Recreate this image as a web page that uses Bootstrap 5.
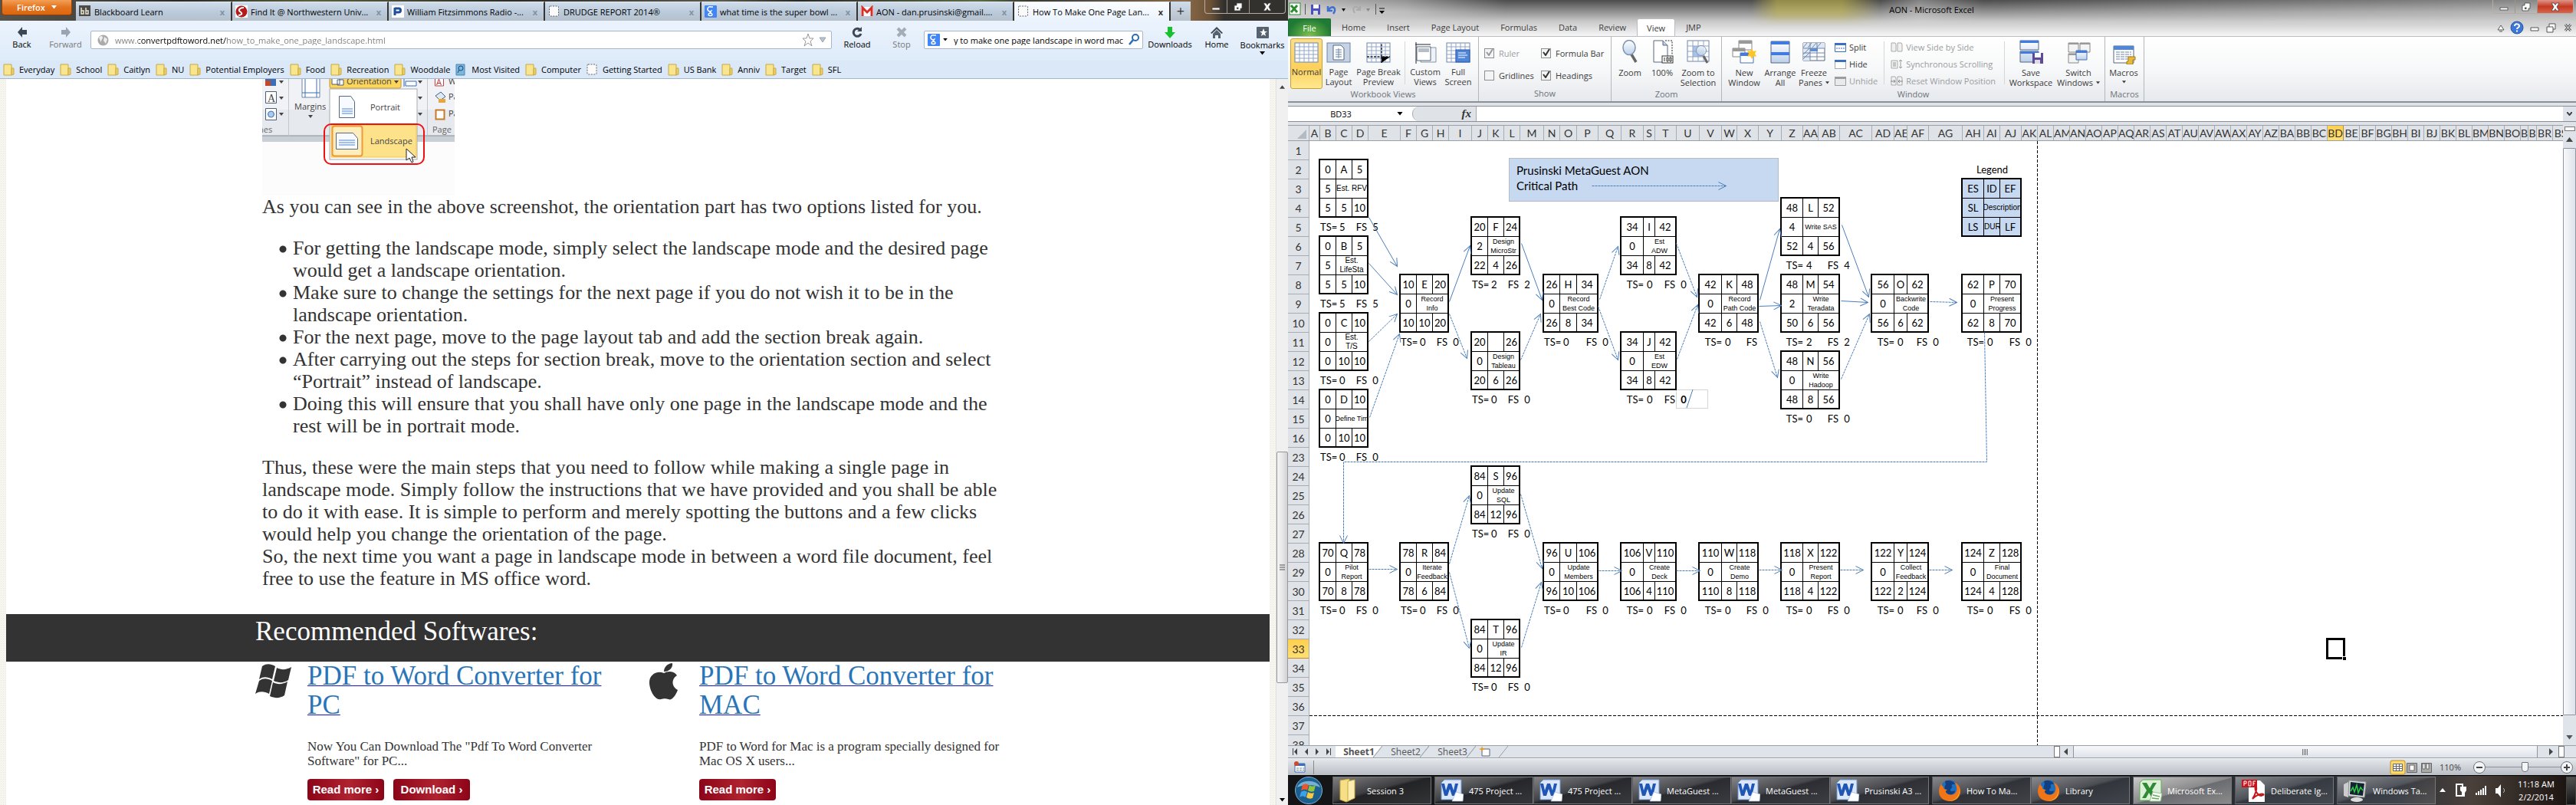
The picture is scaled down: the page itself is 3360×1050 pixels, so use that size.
<!DOCTYPE html>
<html lang="en">
<head>
<meta charset="utf-8">
<title>Desktop: Firefox and Microsoft Excel</title>
<link href="https://cdn.jsdelivr.net/npm/bootstrap@5.3.0/dist/css/bootstrap.min.css" rel="stylesheet">
<style>
  :root { --ui: "Open Sans", "Noto Sans", sans-serif; --cell: Lato, "Open Sans", sans-serif; --page: "Liberation Serif", serif; }
  body { font: 11px/13px var(--ui); color: #000; background: #fff; }
  button, input { font: inherit; color: inherit; border: 0; background: none; padding: 0; margin: 0; }
  svg { display: block; flex: none; }
  a { color: inherit; }
  .win { min-width: 0; }

  /* ---------- browser ---------- */
  .fx-title { height: 27px; background: linear-gradient(90deg,#57544e,#4a4640 6%,#2b2a25 14%,#5b5f3c 24%,#2e2c26 40%,#5d5a4d 56%,#2b2925 62%,#5c6b45 76%,#3b3a2c 80%,#4f4a44 84%,#8a6a48 92%,#6b5136 94%,#33312e 95%); }
  .fx-menu { width: 92px; height: 20px; margin-left: 2px; color: #fff; font-weight: 600; border-radius: 0 0 4px 4px; background: linear-gradient(#f2a055,#e4731e 50%,#dc6610); border: 1px solid #8f4108; border-top: 0; }
  .fx-tabs { margin-left: 5px; padding-top: 2px; flex: 1 1 auto; min-width: 0; }
  .fx-tab { flex: 0 1 204px; min-width: 0; height: 25px; padding: 0 8px 0 4px; border-right: 2px solid #37352f; background: linear-gradient(#cfdcea,#b9c9da 60%,#b6c0ca); border-top: 1px solid #e4edf6; }
  .fx-tab.on { background: linear-gradient(#fbfdff,#ebf3fd); }
  .fx-tab .lbl { flex: 1 1 auto; }
  .fx-x { color: #8592a0; font-weight: 700; font-size: 11px; }
  .fx-tab.on .fx-x { color: #333; }
  .fx-plus { width: 26px; height: 25px; background: linear-gradient(#cfdcea,#b6c0ca); color: #333; font-size: 18px; }
  .caps { height: 18px; margin-right: 3px; border: 1px solid #b5aca3; border-top: 0; border-radius: 0 0 4px 4px; overflow: hidden; }
  .caps button { width: 29px; border-right: 1px solid #9d958c; display: flex; align-items: center; justify-content: center; }
  .caps button:last-child { width: 46px; border: 0; }
  .fx-nav { height: 52px; background: linear-gradient(#ebf3fd,#deebf9); }
  .fx-btn { height: 33px; display: flex; flex-direction: column; align-items: center; justify-content: space-between; white-space: nowrap; }
  .fx-btn.tall { height: 41px; }
  .fx-box { height: 24px; border: 1px solid #a9b6c6; border-radius: 2px; background: #fff; }
  .fx-url { width: 400px; background: linear-gradient(90deg,#7c7c7c 31px,#000 31px 146px,#7c7c7c 146px); -webkit-background-clip: text; background-clip: text; -webkit-text-fill-color: transparent; }
  .fx-marks { height: 24px; background: #dae8f8; border-bottom: 1px solid #a3b5c9; padding-left: 4px; gap: 7px; }
  .fx-marks a { display: flex; align-items: center; gap: 6px; text-decoration: none; white-space: nowrap; color: #000; }
  .tex { width: 8px; background: #f6f5ee; background-image: radial-gradient(#eceae0 1px,transparent 1px); background-size: 3px 3px; }
  .fx-scroll { width: 16px; background: #f0f0f0; border-left: 1px solid #e3e3e3; }
  .fx-thumb { height: 302px; border: 1px solid #979797; border-radius: 2px; background: linear-gradient(90deg,#f5f5f5,#e9e9eb 45%,#d0d0d2); }

  .article { padding-left: 334px; font: 26px/29px var(--page); color: #333; white-space: nowrap; }
  .article p { margin: 0 0 25px; }
  .article ul { padding-left: 22px; margin: 0 0 25px; list-style: none; }
  .article li { padding-left: 18px; background: radial-gradient(circle at 5px 16px,#333 4px,transparent 5px); }
  .article .last { margin: 0; }
  .band { height: 62px; background: #333; color: #fff; font: 35px/40px var(--page); padding: 3px 0 0 325px; margin-top: 32px; }
  .soft { padding-left: 325px; color: #333; }
  .soft section { width: 513px; display: flex; }
  .soft h2 { font: 35px/38px var(--page); color: #2a75b8; margin: 0 0 25px; white-space: nowrap; }
  .soft h2 a { color: #2a75b8; text-decoration-color: #1515cc; text-decoration-thickness: 1px; }
  .soft p { font: 17px/19px var(--page); margin: 0 0 14px; white-space: nowrap; }
  .pic { width: 68px; padding-top: 2px; }
  .pic.mac { width: 66px; }
  .red { width: 100px; height: 28px; border-radius: 4px; background: linear-gradient(90deg,#8c0418,#b02330 55%,#8c0418); color: #fff; font: bold 15px/28px "Liberation Sans", sans-serif; display: block; text-decoration: none; text-align: center; }

  /* ---------- spreadsheet ---------- */
  .xl-top { background: linear-gradient(#4c4c4c,#8b8b8b 14px,#c9c9c9 28px,#f4f4f4 46px); position: relative; }
  .glow { position: absolute; inset: 0; background: linear-gradient(90deg,rgba(255,255,255,.6),rgba(255,255,255,.4) 9%,transparent 17%,transparent 36%,rgba(205,190,70,.55) 38%,rgba(205,190,70,.55) 43%,transparent 46%,rgba(255,255,255,.3) 49%,transparent 54%,rgba(255,255,255,.15) 70%,rgba(255,255,255,.35)); -webkit-mask-image: linear-gradient(#000 16px,transparent 34px); mask-image: linear-gradient(#000 16px,transparent 34px); }
  .xl-title { height: 24px; position: relative; }
  .xl-title .qat { overflow: visible; }
  .xl-tabs { height: 24px; position: relative; border-bottom: 1px solid #b9bcc1; }
  .xl-tabs button { padding: 0 14px; color: #3b3b3b; }
  .xl-tabs .file { width: 56px; padding: 0; color: #fff; border-radius: 2px 2px 0 0; background: radial-gradient(ellipse at 50% 100%,#7cc24c,#1f7a35 75%); border: 1px solid #1c6a2e; border-bottom: 0; }
  .xl-tabs .on { background: #fff; border: 1px solid #b9bcc1; border-bottom: 0; border-radius: 3px 3px 0 0; padding: 0 12px; }
  .xl-rib { height: 86px; background: linear-gradient(#fff,#f7f8f9 50%,#e6e9ed); border-bottom: 2px solid #8b9097; color: #3b3b3b; }
  .grp { border-right: 1px solid #b4b8bd; display: flex; flex-direction: column; }
  .grp .cap { color: #6d7278; text-align: center; height: 17px; }
  .grp .body { flex: 1 1 auto; display: flex; padding: 2px 3px 0; }
  .rb { height: 66px; display: flex; flex-direction: column; align-items: center; white-space: nowrap; text-align: center; border: 1px solid transparent; flex: none; }
  .rb svg { margin: 1px 0 4px; }
  .rb.on { background: linear-gradient(#fddf8b,#fcd05c 60%,#ffe98f); border-color: #c9a033; border-radius: 3px; }
  .w40 { width: 40px; } .w42 { width: 42px; } .w46 { width: 46px; } .w52 { width: 52px; } .w62 { width: 62px; }
  .rsep { width: 1px; background: #d5d7da; height: 56px; margin: 4px 3px 0; }
  .stack { gap: 9px; padding-top: 5px; }
  .stack button { display: flex; align-items: center; gap: 4px; white-space: nowrap; }
  .dim { color: #9a9da1; }
  .chk { appearance: none; width: 13px; height: 13px; border: 1px solid #8b8f94; background: #f4f4f4; margin: 0; }
  .chkrow { display: flex; align-items: center; gap: 6px; height: 14px; position: relative; }
  .chkrow svg { position: absolute; left: 2px; top: 2px; }
  .fbar { height: 29px; padding-top: 4px; background: #dfe3e8; }
  .fbar .line { height: 21px; background: #fff; border-bottom: 1px solid #8b9097; border-top: 1px solid #8b9097; }
  .namebox { width: 130px; text-align: center; }
  .fxarea { width: 84px; background: #dfe3e8; border-radius: 9px 0 0 9px; border: 1px solid #a5abb3; border-width: 0 1px; font: italic bold 15px/18px "Liberation Serif", serif; color: #333; text-align: right; padding-right: 6px; }
  .heads { height: 21px; background: #dfe3e8; border-top: 1px solid #9aa0a8; border-bottom: 1px solid #9aa0a8; font: 14px/20px var(--cell); color: #333; overflow: hidden; }
  .heads div { flex: none; border-right: 1px solid #a7adb5; overflow: hidden; white-space: nowrap; text-align: center; }
  .heads .corner { width: 28px; }
  .sel { background: linear-gradient(#ffd04e,#ffdf72) !important; border-color: #c08a2c !important; }
  .rows { width: 28px; background: #dfe3e8; font: 14px/25px var(--cell); color: #333; overflow: hidden; border-right: 1px solid #a7adb5; }
  .rows div { height: 25px; border-bottom: 1px solid #a7adb5; text-align: center; }
  .sheet { position: relative; overflow: hidden; font: 13px/25px var(--cell); min-width: 0; }
  .sheet > svg { position: absolute; left: 0; top: 0; }
  .act { position: absolute; }
  .box { display: grid; grid-template-rows: 25px 25px 23px; border: 2px solid #000; background: #fff; text-align: center; width: max-content; }
  .box div { border-right: 1px solid #000; border-bottom: 1px solid #000; overflow: hidden; white-space: nowrap; }
  .box .e { border-right: 0; } .box .b { border-bottom: 0; }
  .box .dsc { grid-column: span 2; border-right: 0; font: 9px/12px "Liberation Sans", sans-serif; display: flex; align-items: center; justify-content: center; }
  .box .mid { font-size: 10px; }
  .box.key { background: #c6d9f1; }
  .box .dur { font: 10px/23px "Liberation Sans", sans-serif; }
  .slack { display: grid; padding-left: 2px; white-space: nowrap; height: 25px; }
  .slack span { text-align: right; }
  .slack .v { text-align: left; padding-left: 4px; }
  .note { position: absolute; left: 260px; top: 22px; width: 352px; height: 57px; background: #c6d9f1; border: 1px solid #b7bcc4; padding: 5px 9px; font: 15px/20px var(--cell); }
  .cursor { position: absolute; left: 1326px; top: 648px; width: 25px; height: 28px; border: 3px solid #000; }
  .cursor::after { content: ""; position: absolute; right: -5px; bottom: -5px; background: #000; border: 1px solid #fff; box-sizing: content-box; width: 4px; height: 4px; }
  .stray { position: absolute; left: 478px; top: 324px; width: 42px; height: 25px; border: 1px solid #d5d5d5; }
  .xl-vs { width: 17px; background: #dfe3ea; }
  .xl-vt { border: 1px solid #8f96a0; border-radius: 1px; background: linear-gradient(90deg,#f7f8fa,#dfe3ea); }
  .tabsbar { height: 17px; background: #dfe3ea; border-top: 1px solid #9aa0a8; border-bottom: 1px solid #9aa0a8; font-size: 12px; line-height: 15px; color: #555; }
  .stab { width: 61px; text-align: center; background: linear-gradient(to bottom right,transparent calc(50% - 1px),#9aa0a8 50%,transparent calc(50% + 1px)) right/12px 100% no-repeat; }
  .stab.first { background: linear-gradient(to bottom right,#fff calc(50% - 1px),#9aa0a8 50%,#dfe3ea calc(50% + 1px)) right/12px 100% no-repeat, linear-gradient(#fff,#fff); }
  .hthumb { border: 1px solid #8f96a0; border-width: 0 1px; background: linear-gradient(#f7f8fa,#dfe3ea); width: 606px; }
  .status { height: 22px; background: linear-gradient(#e4e7eb,#b9bec5); border-top: 1px solid #f5f5f5; color: #444; }
  .zoomr { appearance: none; height: 14px; width: 98px; background: linear-gradient(#8a939d,#8a939d) center/100% 1px no-repeat; }
  .zoomr::-webkit-slider-thumb { appearance: none; width: 9px; height: 13px; background: #f3f5f7; border: 1px solid #6c757f; border-radius: 1px 1px 4px 4px; }
  .round { width: 16px; height: 16px; border-radius: 50%; border: 1px solid #6c757f; background: #f4f5f7; display: flex; align-items: center; justify-content: center; }
  .taskbar { height: 39px; background: linear-gradient(90deg,#141416,#1b1c20 20%,#24262c 50%,#2d323a 86%,#4a403a 92%,#17110e); color: #fff; border-top: 1px solid #000; padding: 1px 0; }
  .tk { width: 129px; height: 36px; display: flex; align-items: center; gap: 7px; padding: 0 4px 0 7px; border: 1px solid #77787b; border-left-color: #55565a; background: linear-gradient(165deg,rgba(255,255,255,.45),rgba(255,255,255,.17) 45%,rgba(255,255,255,.05) 50%,rgba(255,255,255,.12)); white-space: nowrap; overflow: hidden; color: #fff; }
  .tk.cur { background: linear-gradient(165deg,#c9c9c9,#8a8a8a 50%,#6a6c70 52%,#8b8b8b); }
  .orb { width: 60px; }
</style>
</head>
<body class="vh-100 overflow-hidden d-flex">

<svg width="0" height="0" class="position-absolute" aria-hidden="true">
  <defs>
    <linearGradient id="gw" x2="0" y2="1"><stop stop-color="#fff"/><stop offset="1" stop-color="#bcd0ea"/></linearGradient>
    <symbol id="folder" viewBox="0 0 15 16"><path d="M1 1h10v14H1z" fill="#f9e58e" stroke="#c9a940"/><path d="M11 6h3v8l-3 1z" fill="#efd06a" stroke="#c9a940"/></symbol>
    <symbol id="dash" viewBox="0 0 15 16"><rect x="1" y="1" width="12" height="13" rx="1" fill="#fafafa" stroke="#666" stroke-dasharray="2 1.5"/></symbol>
    <symbol id="goog" viewBox="0 0 16 16"><rect width="16" height="16" rx="1" fill="#4285f4"/><path d="M11 2H8a3 3 0 1 0 1 5c0 1-2 1-2 2s3 1 3 3-5 2-5 0 2-2 4-2" fill="none" stroke="#fff" stroke-width="1.4"/></symbol>
    <symbol id="mn" viewBox="0 0 12 12"><rect x="1" y="7" width="10" height="3" fill="#fff" stroke="#444" stroke-width=".8"/></symbol>
    <symbol id="mx" viewBox="0 0 12 12"><path d="M4 1h7v7H9v3H1V4h3z" fill="#fff" stroke="#444" stroke-width=".8"/><path d="M4 6.500h2.500v2.500H4z" fill="#555"/></symbol>
    <symbol id="cl" viewBox="0 0 12 12"><path d="M1 1h3.400L6 3.500 7.600 1H11L8 6l3 5H7.600L6 8.500 4.400 11H1l3-5z" fill="#fff" stroke="#444" stroke-width=".8"/></symbol>
    <symbol id="dn" viewBox="0 0 7 5"><path d="M0 0h7L3.500 4.500z" fill="currentColor"/></symbol>
    <symbol id="up" viewBox="0 0 9 6"><path d="M0 6h9L4.500 0z" fill="#444"/></symbol>
    <symbol id="grid" viewBox="0 0 32 28"><rect x="1" y="1" width="30" height="25" fill="#fff" stroke="#6f86a8"/><path d="M1 6h30M1 11h30M1 16h30M1 21h30M7 1v25M13 1v25M19 1v25M25 1v25" stroke="#8fa6c6" fill="none"/></symbol>
    <symbol id="pgl" viewBox="0 0 32 28"><rect x="1" y="1" width="30" height="25" fill="#c5d3e4" stroke="#6f86a8"/><path d="M9 4h10l4 4v15H9z" fill="#fff" stroke="#56677e"/><path d="M12 10h8M12 13h8M12 16h8M12 19h8M16 8v13" stroke="#6f86a8"/></symbol>
    <symbol id="pbr" viewBox="0 0 32 28"><use href="#grid"/><path d="M20 19V1M1 19h19M20 27v-8h11" stroke="#223" stroke-width="1.500" stroke-dasharray="3 1.500"/></symbol>
    <symbol id="cust" viewBox="0 0 32 28"><path d="M10 7h20v19H10z" fill="#eef3fa" stroke="#8a93a0"/><path d="M5 6h18v18H5z" fill="#fff" stroke="#56677e"/><path d="M7 8h14v5H7z" fill="#b9bec6"/><path d="M3 3h20M4 0v28" stroke="#223"/></symbol>
    <symbol id="full" viewBox="0 0 32 28"><use href="#grid"/><rect x="13" y="10" width="18" height="16" fill="#4f86d8" stroke="#2c57a5"/><path d="M16 14h10M16 17h12M16 20h9" stroke="#fff"/></symbol>
    <symbol id="mag" viewBox="0 0 32 32"><path d="M18 19l6 10" stroke="#666" stroke-width="3.500"/><ellipse cx="15" cy="10" rx="8" ry="9.500" fill="url(#gw)" stroke="#7f93ad" stroke-width="1.500"/></symbol>
    <symbol id="hund" viewBox="0 0 32 32"><path d="M5 1h12l6 6v22H5z" fill="#fff" stroke="#56677e"/><path d="M17 1v6h6" fill="#bcd0ea" stroke="#56677e"/><path d="M20 1h9v18" fill="none" stroke="#223" stroke-dasharray="2 1.500"/><rect x="16" y="21" width="14" height="9" fill="#fff" stroke="#333"/><path d="M19 23v5M22 23h2v5h-2zM26 23h2v5h-2z" fill="none" stroke="#333"/></symbol>
    <symbol id="zsel" viewBox="0 0 32 32"><rect x="2" y="1" width="28" height="27" fill="#fff" stroke="#6f86a8"/><path d="M9 8h14v14H9z" fill="#a9c3e8"/><path d="M2 8h28M2 15h28M2 22h28M9 1v27M16 1v27M23 1v27" stroke="#8fa6c6"/><path d="M23 21l5 9" stroke="#666" stroke-width="3"/><circle cx="20" cy="14" r="6.500" fill="url(#gw)" fill-opacity=".8" stroke="#7f93ad"/></symbol>
    <symbol id="nwin" viewBox="0 0 32 32"><path d="M9 1h17v12H9z" fill="#fff" stroke="#888"/><path d="M9 1h17v4H9z" fill="#999"/><path d="M1 11h16v11H1z" fill="#fff" stroke="#888"/><path d="M1 11h16v4H1z" fill="#999"/><path d="M11 17h17v13H11z" fill="#fff" stroke="#4472b8"/><path d="M11 17h17v4H11z" fill="#3f7be0"/><path d="M26 11l2 4 4-1-2 4 2 4-4-1-2 4-2-4-4 1 2-4-2-4 4 1z" fill="#ffc423"/></symbol>
    <symbol id="arr" viewBox="0 0 32 32"><path d="M4 2h24v28H4z" fill="url(#gw)" stroke="#56677e"/><path d="M4 2h24v4H4zM4 16h24v4H4z" fill="#3f7be0"/></symbol>
    <symbol id="frz" viewBox="0 0 32 30"><path d="M2 3h28v23H2z" fill="#fff" stroke="#56677e"/><path d="M2 3h28v7H2zM2 10h9v16H2z" fill="#dfe9f5"/><path d="M11 10h10v4H11z" fill="#5a8fe0"/><path d="M2 10h28M2 16h28M2 21h28M11 3v23M20 3v23M2 9l5-6M8 9l5-6M14 9l5-6M20 9l5-6M2 18l8-8M2 24l9-9" stroke="#6f86a8" fill="none"/></symbol>
    <symbol id="sw" viewBox="0 0 15 12"><path d="M.500 .500h14v11H.500z" fill="#fff" stroke="currentColor"/><path d="M0 0h15v3H0z" fill="currentColor"/><path d="M2 7h11" stroke="currentColor" stroke-dasharray="2 1"/></symbol>
    <symbol id="hid" viewBox="0 0 15 12"><path d="M.500 .500h14v11H.500z" fill="#fff" stroke="#555" stroke-dasharray="1 1"/><path d="M0 0h15v3H0z" fill="currentColor"/></symbol>
    <symbol id="unh" viewBox="0 0 15 12"><path d="M.500 .500h14v11H.500z" fill="#e9eaec" stroke="currentColor"/><path d="M0 0h15v3H0z" fill="currentColor"/></symbol>
    <symbol id="pgs" viewBox="0 0 16 13"><path d="M1 1h5l1 2v9H1zM9 1h5l1 2v9H9z" fill="#f1f1f1" stroke="#aaa"/></symbol>
    <symbol id="syn" viewBox="0 0 16 13"><path d="M1 2h8v10H1z" fill="#f1f1f1" stroke="#aaa"/><path d="M3 5h4M3 7h4M3 9h4M13 1v11M11 3l2-2 2 2M11 10l2 2 2-2" fill="none" stroke="#999"/></symbol>
    <symbol id="rst" viewBox="0 0 16 13"><path d="M1 1h5l1 2v9H1zM9 1h5l1 2v9H9z" fill="#f1f1f1" stroke="#aaa"/><path d="M0 7h6M4 5l2 2-2 2M16 7h-6M12 5l-2 2 2 2" fill="none" stroke="#888"/></symbol>
    <symbol id="savw" viewBox="0 0 32 32"><path d="M2 1h24v12H2zM2 15h24v14H2z" fill="url(#gw)" stroke="#56677e"/><path d="M2 1h24v3H2zM2 15h24v3H2z" fill="#3f7be0"/><path d="M18 17h14v14H18z" fill="#5d4a9c"/><path d="M21 17h8v6h-8z" fill="#fff"/><path d="M21 26h7v5h-7z" fill="#ddd"/></symbol>
    <symbol id="swi" viewBox="0 0 32 32"><path d="M3 4h13v12H3zM18 4h13v12H18zM3 18h13v12H3z" fill="#f4f4f4" stroke="#888"/><path d="M3 4h13v2H3zM18 4h13v2H18zM3 18h13v2H3z" fill="#999"/><path d="M13 14h14v12H13z" fill="url(#gw)" stroke="#4472b8"/><path d="M13 14h14v3H13z" fill="#3f7be0"/></symbol>
    <symbol id="mac" viewBox="0 0 32 32"><path d="M3 8h26v22H3z" fill="#fff" stroke="#56677e"/><path d="M3 8h26v5H3z" fill="#4f86d8"/><path d="M6 16h20M6 19h20M6 22h20M6 25h20" stroke="#6f86a8" stroke-dasharray="5 1"/><path d="M22 22h9v4h-3v6h-8v-4h2z" fill="#e7b93c" stroke="#a37c14"/></symbol>
    <symbol id="word" viewBox="0 0 30 30"><path d="M5 1h22v26H1V5z" fill="#dbe7f8" stroke="#6d93cf"/><path d="M1 6l4 16h4l3-9 3 9h4l4-16h-4l-2 9-3-9h-4l-3 9-2-9z" fill="#1f56b5"/><path d="M20 17l10 3-1 9H15z" fill="#fff" stroke="#9db7de" stroke-width=".7"/></symbol>
    <symbol id="xls" viewBox="0 0 30 30"><path d="M5 1h24v27H1V5z" fill="#dcefd7" stroke="#5fae54"/><path d="M4 5h6l4 7 4-7h5l-6 10 6 10h-6l-4-7-4 7H4l6-10z" fill="#2e8b33"/><path d="M18 17l12 2-2 10H14z" fill="#fff" stroke="#8fc78a"/><path d="M18 21l9 2M17 25l9 1" stroke="#5fae54" stroke-width="1.500"/></symbol>
    <symbol id="ff" viewBox="0 0 30 30"><circle cx="15" cy="14" r="12.500" fill="#1d6fbf"/><path d="M9 3c6-3 12 1 14 4-5-1-6 1-5 3s-3 3-2 5 5 1 6 0c0 5-6 7-10 4S8 9 10 7z" fill="#123f80"/><path d="M5 5c-1 3 0 4 2 5-1 3 2 4 5 4-3 2-3 4 1 6 6 2 10-1 11-5 1-4-1-8-3-11 6 3 9 8 8 14-1 7-7 11-14 11C7 29 1 24 1 16 1 11 3 8 5 5z" fill="#ef7516"/><path d="M27 12c2 8-3 16-12 17 8 0 15-7 12-17z" fill="#ffd23d"/></symbol>
  </defs>
</svg>

<!-- Browser window -->
<div class="win w-50 d-flex flex-column">
  <div class="fx-title d-flex flex-shrink-0">
    <button class="fx-menu d-flex align-items-center justify-content-center gap-2">Firefox <svg width="7" height="5"><use href="#dn"/></svg></button>
    <div class="fx-tabs d-flex" id="tabs"></div>
    <div class="caps d-flex">
      <button aria-label="Minimize"><svg width="12" height="12"><use href="#mn"/></svg></button><button aria-label="Restore"><svg width="12" height="12"><use href="#mx"/></svg></button><button aria-label="Close"><svg width="12" height="12"><use href="#cl"/></svg></button>
    </div>
  </div>
  <div class="fx-nav d-flex align-items-start pt-1 flex-shrink-0">
    <button class="fx-btn" style="width:57px"><svg class="mt-1" width="14" height="14"><path d="M7 0L1 7l6 7v-4h6V4H7z" fill="#3b4754"/></svg>Back</button>
    <button class="fx-btn dim" style="width:57px"><svg class="mt-1" width="14" height="14"><path d="M7 0l6 7-6 7v-4H1V4h6z" fill="#9aa5b1"/></svg><span style="color:#777">Forward</span></button>
    <div class="fx-box d-flex align-items-center flex-grow-1 ms-1 px-1" style="margin-top:9px">
      <svg class="ms-1 me-1" width="15" height="15"><circle cx="7.500" cy="7.500" r="7" fill="#aaa"/><path d="M2 4c3-3 5-2 5 0S4 8 5 11M9 3l4 3-2 6-3-4z" fill="#eee"/></svg>
      <input aria-label="Address" class="fx-url ms-1" value="www.convertpdftoword.net/how_to_make_one_page_landscape.html">
      <svg class="ms-auto" width="34" height="18"><path d="M8 1l2 6h5l-4 4 2 6-5-4-5 4 2-6-4-4h5z" fill="#fff" stroke="#999"/><path d="M23 6h8l-4 6z" fill="#b9c3cd" stroke="#9aa5b1"/></svg>
    </div>
    <button class="fx-btn" style="width:66px"><svg class="mt-1" width="14" height="14"><path d="M11 4a5 5 0 1 0 1 5" fill="none" stroke="#3b4754" stroke-width="3"/><path d="M13 0v6H7z" fill="#3b4754"/></svg>Reload</button>
    <button class="fx-btn dim" style="width:50px"><svg class="mt-1" width="14" height="14"><path d="M2 2l10 10M12 2L2 12" stroke="#a3adb8" stroke-width="4"/></svg><span style="color:#777">Stop</span></button>
    <div class="fx-box d-flex align-items-center px-1 ms-1" style="width:286px;margin-top:9px">
      <svg width="16" height="16"><use href="#goog"/></svg>
      <svg class="mx-1" width="6" height="4"><use href="#dn"/></svg>
      <input aria-label="Search" class="flex-grow-1 ms-1" value="y to make one page landscape in word mac">
      <svg width="14" height="16"><circle cx="9" cy="5" r="4" fill="#fff" stroke="#2b6cb0" stroke-width="2"/><path d="M6 8l-5 6" stroke="#2b6cb0" stroke-width="2.500"/></svg>
    </div>
    <button class="fx-btn" style="width:70px"><svg class="mt-1" width="14" height="15"><path d="M4 0h6v7h4l-7 8-7-8h4z" fill="#16c22c"/></svg>Downloads</button>
    <button class="fx-btn" style="width:52px"><svg class="mt-1" width="16" height="15"><path d="M8 0l8 8-1.500 1L8 3 1.500 9 0 8z" fill="#3b4754"/><path d="M3 9l5-5 5 5v6h-3v-4H6v4H3z" fill="#56626f"/></svg>Home</button>
    <button class="fx-btn tall" style="width:67px"><svg class="mt-1" width="16" height="15"><rect width="16" height="15" rx="1" fill="#56626f"/><path d="M9 2l1.500 4H14l-3 2 1 4-3-2-3 2 1-4-3-2h3.500z" fill="#fff"/></svg>Bookmarks<svg width="7" height="5"><use href="#dn"/></svg></button>
  </div>
  <div class="fx-marks d-flex flex-shrink-0" id="marks"></div>

  <div class="d-flex flex-grow-1 overflow-hidden">
    <div class="tex"></div>
    <main class="flex-grow-1 overflow-hidden">
      <div class="article">
        <svg width="251" height="152" font-family="Open Sans" font-size="11" fill="#444">
          <rect width="251" height="152" fill="#fcfcfc"/><rect width="251" height="74" fill="#f0f2f5"/><rect y="40" width="251" height="34" fill="#e6e9ee"/><rect y="74" width="251" height="8" fill="#c9cfd7"/><path d="M0 74h251" stroke="#8b9097"/>
          <path d="M34.500 0v74M215.500 0v74" stroke="#c3c8cf"/>
          <path d="M4 0h14v9H4z" fill="#3b6fb5"/><path d="M4 2h7v7H4z" fill="#c24a2a"/>
          <path d="M4.500 16.500h14v15h-14zM4.500 38.500h14v15h-14z" fill="#fff" stroke="#4d5f78"/><text x="7" y="30" font-family="Liberation Serif" font-size="14">A</text><circle cx="11.500" cy="46" r="4" fill="#a9c9ee" stroke="#3b6fb5"/>
          <path d="M22 2h6l-3 4zM22 23h6l-3 4zM22 44h6l-3 4zM60 47h6l-3 4zM203 2h6l-3 4zM203 23h6l-3 4zM203 44h6l-3 4z" fill="#444"/>
          <path d="M52 -2h23v26H52z" fill="#fff" stroke="#6f86a8"/><path d="M56 0v24M71 0v24M52 18h23" stroke="#3b6fb5"/>
          <text x="42" y="40">Margins</text><text x="-5" y="70" fill="#666">nes</text><text x="222" y="70" fill="#666">Page</text>
          <rect x="88" y="-3" width="93" height="15" rx="2" fill="#fbd55c" stroke="#c8962e"/><path d="M91 -2h10v9H91zM98 1h8v7h-8z" fill="#fff" stroke="#4d5f78"/><text x="110" y="7">Orientation</text><path d="M172 2h6l-3 4z"/>
          <path d="M187 3h14v6h-14z" fill="#fff" stroke="#3b6fb5"/><path d="M185 0v10" stroke="#3b6fb5"/>
          <path d="M225.500 -2h11v11h-11z" fill="#fff" stroke="#b44"/><text x="227" y="8" fill="#b33">A</text><text x="243" y="7">W</text>
          <path d="M226 22l7-5 6 6-7 5z" fill="#dfe7f1" stroke="#3b5f8f"/><path d="M230 26h9v5h-9z" fill="#e7a63c"/><text x="243" y="27">Pa</text>
          <path d="M226.500 40.500h11v12h-11z" fill="#fff" stroke="#c77a26" stroke-width="2"/><text x="243" y="49">Pa</text>
          <rect x="88" y="13" width="114" height="92" fill="#fff" stroke="#a6abb2"/>
          <path d="M100.500 22.500h15l5 7v21h-20z" fill="#f7faff" stroke="#56677e"/><path d="M104 39h14M104 42h14M104 45h14" stroke="#4f86d8"/>
          <text x="141" y="41">Portrait</text>
          <rect x="90" y="60" width="111" height="42" fill="#fde28a" stroke="#efc64b"/><rect x="91.500" y="61.500" width="39" height="39" rx="3" fill="#fdeebb" stroke="#ee9a3a" stroke-width="2"/>
          <path d="M96.500 70.500h22l6 7v14h-28z" fill="#f7faff" stroke="#56677e"/><path d="M100 80h21M100 83h21M100 86h21" stroke="#4f86d8"/>
          <text x="141" y="85">Landscape</text>
          <rect x="81" y="59" width="130" height="52" rx="9" fill="none" stroke="#f01010" stroke-width="2"/>
          <path d="M188 91v15l4-3 3 6 2-1-2-6h5z" fill="#fff" stroke="#222"/>
        </svg>
        <p>As you can see in the above screenshot, the orientation part has two options listed for you.</p>
        <ul>
          <li>For getting the landscape mode, simply select the landscape mode and the desired page<br>would get a landscape orientation.</li>
          <li>Make sure to change the settings for the next page if you do not wish it to be in the<br>landscape orientation.</li>
          <li>For the next page, move to the page layout tab and add the section break again.</li>
          <li>After carrying out the steps for section break, move to the orientation section and select<br>“Portrait” instead of landscape.</li>
          <li>Doing this will ensure that you shall have only one page in the landscape mode and the<br>rest will be in portrait mode.</li>
        </ul>
        <p class="last">Thus, these were the main steps that you need to follow while making a single page in<br>landscape mode. Simply follow the instructions that we have provided and you shall be able<br>to do it with ease. It is simple to perform and merely spotting the buttons and a few clicks<br>would help you change the orientation of the page.<br>So, the next time you want a page in landscape mode in between a word file document, feel<br>free to use the feature in MS office word.</p>
      </div>
      <div class="band">Recommended Softwares:</div>
      <div class="soft d-flex">
        <section>
          <div class="pic"><svg width="48" height="48" fill="#333"><path d="M9 4c6-4 11-3 17 0l-4 17c-6-3-11-4-17 0zM28 6c6 3 12 3 19-1l-4 17c-6 4-12 4-19 1zM5 23c6-4 11-3 17 0l-4 17c-6-3-12-4-18 0zM23 25c6 3 12 3 19-1l-4 18c-6 4-12 4-19 1z"/></svg></div>
          <div>
            <h2><a href="#">PDF to Word Converter for<br>PC</a></h2>
            <p>Now You Can Download The "Pdf To Word Converter<br>Software" for PC...</p>
            <div class="d-flex gap-2"><a class="red me-1" href="#">Read more ›</a><a class="red" href="#">Download ›</a></div>
          </div>
        </section>
        <section>
          <div class="pic mac"><svg width="40" height="50" fill="#333"><path d="M20 13c4-2 12-4 17 3-8 5-7 15 1 19-3 8-8 14-12 12-4-1-6-1-10 0C9 49 1 36 1 25c0-10 10-16 19-12zM20 11C20 5 25 0 31 0c1 6-4 11-11 11z"/></svg></div>
          <div>
            <h2><a href="#">PDF to Word Converter for<br>MAC</a></h2>
            <p>PDF to Word for Mac is a program specially designed for<br>Mac OS X users...</p>
            <a class="red" href="#">Read more ›</a>
          </div>
        </section>
      </div>
    </main>
    <div class="tex"></div>
    <div class="fx-scroll d-flex flex-column align-items-center">
      <svg class="mt-2" width="7" height="5"><use href="#up"/></svg>
      <div style="flex:471"></div>
      <div class="fx-thumb w-100 d-flex align-items-center justify-content-center"><svg width="7" height="8"><path d="M0 1h7M0 4h7M0 7h7" stroke="#555"/></svg></div>
      <div style="flex:150"></div>
      <svg class="mb-1" width="7" height="5"><use href="#dn"/></svg>
    </div>
  </div>
</div>

<!-- Spreadsheet window -->
<div class="win w-50 d-flex flex-column">
  <div class="xl-top flex-shrink-0">
    <div class="glow"></div>
    <div class="xl-title d-flex align-items-center">
      <svg class="qat ms-1" width="104" height="20"><rect x="-2" y="2" width="14" height="15" fill="#fff" stroke="#2e8b33"/><path d="M0 5l8 9M8 5l-8 9" stroke="#2e8b33" stroke-width="3"/><path d="M18.500 3v14M110.500 3v14" stroke="#555"/><path d="M26 4h12v13H26z" fill="#4a50c0"/><path d="M29 4h7v5h-7z" fill="#fff"/><path d="M29 12h6v5h-6z" fill="#ddd"/><path d="M48 6v6h6M49 11c4-7 12-3 6 5" fill="none" stroke="#3f6fd0" stroke-width="2.500"/><path d="M66 9h5l-2.500 4z" fill="#111"/><path d="M90 6v5h-5M89 10c-4-6-11-3-6 5" fill="none" stroke="#aaa" stroke-width="2"/><path d="M98 9h5l-2.500 4z" fill="#888"/><path d="M115 9h7" stroke="#111"/><path d="M115 12h7l-3.500 4z"/></svg>
      <div class="flex-grow-1 text-center">AON - Microsoft Excel</div>
      <div class="caps d-flex align-self-start">
        <button aria-label="Minimize"><svg width="12" height="12"><use href="#mn"/></svg></button><button aria-label="Restore"><svg width="12" height="12"><use href="#mx"/></svg></button><button aria-label="Close" style="background:linear-gradient(#e0948a,#c43a22 50%,#d9654e)"><svg width="12" height="12"><use href="#cl"/></svg></button>
      </div>
    </div>
    <div class="xl-tabs d-flex">
      <button class="file">File</button><button>Home</button><button>Insert</button><button>Page Layout</button><button>Formulas</button><button>Data</button><button>Review</button><button class="on">View</button><button>JMP</button>
      <svg class="ms-auto align-self-center me-1" width="102" height="18"><path d="M4 12l4-6 4 6zM6 14h4" fill="#fff" stroke="#555"/><circle cx="29" cy="9" r="8" fill="#3d78d6" stroke="#2a559d"/><path d="M26 7c0-4 6-3 6 0 0 2-3 2-3 4M29 12.500v2" fill="none" stroke="#fff" stroke-width="2"/><path d="M47 9h10v4H47zM68 8h8v7h-8zM71 8V4h8v7h-3" fill="#fff" stroke="#555"/><path d="M92 5l7 8M99 5l-7 8" stroke="#555" stroke-width="3"/><path d="M92 5l7 8M99 5l-7 8" stroke="#fff" stroke-width="1"/></svg>
    </div>
  </div>

  <div class="xl-rib d-flex flex-shrink-0">
    <div class="grp" style="width:249px"><div class="body">
      <button class="rb on w42"><svg width="32" height="28" class="mt-1"><use href="#grid"/></svg>Normal</button>
      <button class="rb w42"><svg width="32" height="28" class="mt-1"><use href="#pgl"/></svg>Page<br>Layout</button>
      <button class="rb w62"><svg width="32" height="28" class="mt-1"><use href="#pbr"/></svg>Page Break<br>Preview</button>
      <div class="rsep"></div>
      <button class="rb w46"><svg width="32" height="28" class="mt-1"><use href="#cust"/></svg>Custom<br>Views</button>
      <button class="rb w40"><svg width="32" height="28" class="mt-1"><use href="#full"/></svg>Full<br>Screen</button>
    </div><div class="cap">Workbook Views</div></div>

    <div class="grp" style="width:173px"><div class="body">
      <div class="d-flex flex-column ms-1" style="gap:15px;width:74px;padding-top:12px">
        <div class="chkrow dim"><input class="chk" type="checkbox" id="c1" checked disabled><svg width="10" height="9"><path d="M1 4l3 4 5-8" fill="none" stroke="#999" stroke-width="2"/></svg><label for="c1">Ruler</label></div>
        <div class="chkrow"><input class="chk" type="checkbox" id="c2"><label for="c2">Gridlines</label></div>
      </div>
      <div class="d-flex flex-column" style="gap:15px;padding-top:12px">
        <div class="chkrow"><input class="chk" type="checkbox" id="c3" checked><svg width="10" height="9"><path d="M1 4l3 4 5-8" fill="none" stroke="#333" stroke-width="2"/></svg><label for="c3">Formula Bar</label></div>
        <div class="chkrow"><input class="chk" type="checkbox" id="c4" checked><svg width="10" height="9"><path d="M1 4l3 4 5-8" fill="none" stroke="#333" stroke-width="2"/></svg><label for="c4">Headings</label></div>
      </div>
    </div><div class="cap">Show</div></div>

    <div class="grp" style="width:144px"><div class="body">
      <button class="rb w42"><svg width="32" height="32"><use href="#mag"/></svg>Zoom</button>
      <button class="rb w42"><svg width="32" height="32"><use href="#hund"/></svg>100%</button>
      <button class="rb w52"><svg width="32" height="32"><use href="#zsel"/></svg>Zoom to<br>Selection</button>
    </div><div class="cap">Zoom</div></div>

    <div class="grp" style="width:500px"><div class="body">
      <button class="rb w52"><svg width="32" height="32"><use href="#nwin"/></svg>New<br>Window</button>
      <button class="rb w42"><svg width="32" height="32"><use href="#arr"/></svg>Arrange<br>All</button>
      <button class="rb w46"><svg width="32" height="32"><use href="#frz"/></svg>Freeze<br><span class="d-flex align-items-center gap-1">Panes<svg class="m-0" width="5" height="4"><use href="#dn"/></svg></span></button>
      <div class="stack d-flex flex-column ms-1">
        <button><svg width="15" height="12" color="#3b6fc5"><use href="#sw"/></svg>Split</button>
        <button><svg width="15" height="12" color="#3b6fc5"><use href="#hid"/></svg>Hide</button>
        <button class="dim"><svg width="15" height="12" color="#9a9da1"><use href="#unh"/></svg>Unhide</button>
      </div>
      <div class="rsep ms-2 me-2"></div>
      <div class="stack d-flex flex-column">
        <button class="dim"><svg width="16" height="13"><use href="#pgs"/></svg>View Side by Side</button>
        <button class="dim"><svg width="16" height="13"><use href="#syn"/></svg>Synchronous Scrolling</button>
        <button class="dim"><svg width="16" height="13"><use href="#rst"/></svg>Reset Window Position</button>
      </div>
      <div class="d-flex ms-auto">
      <div class="rsep"></div>
      <button class="rb w62"><svg width="32" height="32"><use href="#savw"/></svg>Save<br>Workspace</button>
      <button class="rb w62"><svg width="32" height="32"><use href="#swi"/></svg>Switch<br><span class="d-flex align-items-center gap-1">Windows<svg class="m-0" width="5" height="4"><use href="#dn"/></svg></span></button>
      </div>
    </div><div class="cap">Window</div></div>

    <div class="grp" style="width:51px"><div class="body">
      <button class="rb w42"><svg width="32" height="32"><use href="#mac"/></svg>Macros<svg width="5" height="4" class="mt-1"><use href="#dn"/></svg></button>
    </div><div class="cap">Macros</div></div>
  </div>

  <div class="fbar flex-shrink-0">
    <div class="line d-flex">
      <input aria-label="Name box" class="namebox ms-1" value="BD33">
      <svg class="align-self-center mx-2" width="8" height="5"><use href="#dn"/></svg>
      <div class="fxarea ms-1">fx</div>
      <input aria-label="Formula" class="flex-grow-1">
      <button class="d-flex align-items-center justify-content-center xl-vs" aria-label="Expand formula bar"><svg width="7" height="5"><path d="M0 0l3.500 4L7 0" fill="none" stroke="#444" stroke-width="2"/></svg></button>
    </div>
  </div>

  <div class="d-flex flex-grow-1 overflow-hidden">
    <div class="flex-grow-1 d-flex flex-column overflow-hidden">
      <div class="heads d-flex flex-shrink-0" id="heads"><div class="corner"><svg width="28" height="20"><path d="M24 5v12H12z" fill="#b4bac2"/></svg></div></div>
      <div class="d-flex flex-grow-1 overflow-hidden">
        <div class="rows flex-shrink-0" id="rows"></div>
        <div class="sheet flex-grow-1" id="sheet"></div>
      </div>
    </div>
    <div class="xl-vs d-flex flex-column align-items-center">
      <div style="width:14px;height:6px;margin-top:2px;background:#fff;border:1px solid #777"></div>
      <svg class="my-2" width="9" height="6"><use href="#up"/></svg>
      <div class="xl-vt w-100 flex-grow-1"></div>
      <svg width="9" height="6" style="margin:26px 0 7px;color:#555"><use href="#dn"/></svg>
    </div>
  </div>

  <div class="tabsbar d-flex flex-shrink-0">
    <svg width="62" height="15" fill="#444"><path d="M6 3h1v9H6zM12 3v9L8 7.500zM26 3v9l-4-4.500zM36 3v9l4-4.500zM50 3v9l4-4.500zM55 3h1v9h-1z"/></svg>
    <button class="stab first fw-bold">Sheet1</button><button class="stab">Sheet2</button><button class="stab">Sheet3</button>
    <svg width="44" height="15"><path d="M8 4h10v9H8z" fill="#fff" stroke="#56677e"/><path d="M8 0l1 3 3 1-3 1-1 3-1-3-3-1 3-1z" fill="#ef9a1e"/><path d="M42 0L30 15" stroke="#9aa0a8"/></svg>
    <div class="d-flex ms-auto align-items-stretch">
      <div style="width:8px;background:#fff;border:1px solid #777"></div>
      <svg width="17" height="15"><path d="M10 3v9L5 7.500z" fill="#444"/></svg>
      <div class="hthumb d-flex align-items-center justify-content-center"><svg width="8" height="8"><path d="M.500 0v8M2.500 0v8M4.500 0v8M6.500 0v8" stroke="#777"/></svg></div>
      <svg width="27" height="15"><path d="M15 3v9l5-4.500z" fill="#444"/></svg>
      <div style="width:8px;background:#fff;border:1px solid #777;margin-right:15px"></div>
    </div>
  </div>
  <div class="status d-flex align-items-center flex-shrink-0">
    <svg class="ms-2" width="30" height="20"><path d="M1 5h13v11H1z" fill="#fff" stroke="#3b6fb5"/><path d="M1 5h13v3H1z" fill="#3b6fc5"/><path d="M3 11h10M3 13.500h10" stroke="#6f86a8" stroke-dasharray="3 1"/><circle cx="3" cy="5" r="3" fill="#cf4a2a"/><path d="M25.500 1v18" stroke="#888"/></svg>
    <div class="ms-auto d-flex align-items-center">
      <svg width="64" height="20"><rect x="4" y="1" width="19" height="18" rx="2" fill="#fcdb6c" stroke="#c08a2c"/><path d="M7.500 5.500h12v9h-12zM7.500 8.500h12M7.500 11.500h12M11.500 5v10M15.500 5v10" fill="#fff" stroke="#666"/><path d="M25.500 4.500h13v12h-13z" fill="#aaa" stroke="#666"/><path d="M29 7h6v7h-6z" fill="#fff" stroke="#666"/><path d="M44.500 4.500h13v12h-13z" fill="#aaa" stroke="#666"/><path d="M46 5h3v7h-3zM51 5h3v7h-3z" fill="#fff" stroke="#666"/></svg>
      <span class="ms-1 me-3">110%</span>
      <button class="round" aria-label="Zoom out"><svg width="8" height="8"><path d="M0 4h8" stroke="#444" stroke-width="2"/></svg></button>
      <input aria-label="Zoom level" class="zoomr" type="range" min="0" max="100" value="53">
      <button class="round me-1" aria-label="Zoom in"><svg width="8" height="8"><path d="M0 4h8M4 0v8" stroke="#444" stroke-width="2"/></svg></button>
    </div>
  </div>
  <div class="taskbar d-flex flex-shrink-0">
    <button class="orb d-flex justify-content-center pe-1" aria-label="Start"><svg width="38" height="36"><circle cx="19" cy="18" r="17.500" fill="#1c5f8f" stroke="#7fb4d4"/><path d="M4 14C8 3 30 3 34 14c-8-4-22-4-30 0z" fill="#8fc4e2" opacity=".8"/><path d="M11 11c3-2 5-2 8 0l-2 7c-3-2-5-1-8 0z" fill="#e8592a"/><path d="M20 11c3 2 5 2 8 0l-2 8c-3 1-5 1-8-1z" fill="#8cc63e"/><path d="M9 20c3-2 5-2 8 0l-2 7c-3-2-5-2-8 0z" fill="#3fa0e4"/><path d="M18 20c3 2 5 2 8 1l-2 7c-3 1-5 1-8-1z" fill="#fbc93d"/></svg></button>
    <div class="d-flex gap-1" id="tasks"></div>
    <div class="ms-auto d-flex align-items-center">
      <svg width="100" height="34"><path d="M5 19h8l-4-5z" fill="#fff"/><path d="M27 9h8v15h-8z" fill="none" stroke="#fff" stroke-width="2"/><path d="M32 12h8v5l-2 3v5h-3v-5l-3-3z" fill="#fff"/><path d="M52 23v-3h2v3zM55 23v-5h2v5zM58 23v-7h2v7zM61 23v-9h2v9zM64 23V11h2v12z" fill="#fff"/><path d="M78 14h3l4-5v17l-4-5h-3z" fill="#fff"/><path d="M88 14c2 2 2 4 0 6" fill="none" stroke="#ccc"/></svg>
      <div class="text-center" style="width:62px;line-height:17px">11:18 AM<br>2/2/2014</div>
      <button aria-label="Show desktop" style="width:13px;height:37px;margin-left:8px;background:linear-gradient(165deg,#555,#111);border:1px solid #444"></button>
    </div>
  </div>
</div>

<script src="https://cdn.jsdelivr.net/npm/bootstrap@5.3.0/dist/js/bootstrap.bundle.min.js"></script>
<script>
const $ = id => document.getElementById(id);
const use = (id, w, h) => `<svg width="${w}" height="${h}"><use href="#${id}"/></svg>`;

/* browser tabs and bookmarks */
const fav = [
  '<svg width="16" height="16"><rect width="15" height="14" fill="#4b4a46"/><path d="M3 3v8h3V7H3M9 3v8h3V7H9" fill="none" stroke="#e8e2cf" stroke-width="1.500"/></svg>',
  '<svg width="16" height="16"><rect width="16" height="16" fill="#fff"/><circle cx="8" cy="8" r="7.500" fill="#b31b1b"/><path d="M11 3c-5 0-8 3-5 5s4 4-2 5" fill="none" stroke="#fff" stroke-width="2"/></svg>',
  '<svg width="16" height="16"><rect width="16" height="16" fill="#fff"/><path d="M4 3v10M4 4h5a2.500 2.500 0 0 1 0 5H5" fill="none" stroke="#1f4e9a" stroke-width="3"/></svg>',
  use('dash',16,16), use('goog',16,16),
  '<svg width="16" height="16"><rect y="2" width="16" height="12" fill="#fff"/><path d="M2 14V3l6 6 6-6v11" fill="none" stroke="#d93025" stroke-width="3"/></svg>',
  use('dash',16,16)];
['Blackboard Learn','Find It @ Northwestern Univ...','William Fitzsimmons Radio -...','DRUDGE REPORT 2014®','what time is the super bowl ...','AON - dan.prusinski@gmail....','How To Make One Page Lan...']
  .forEach((t, i) => $('tabs').insertAdjacentHTML('beforeend', `<button class="fx-tab d-flex align-items-center gap-1${i == 6 ? ' on' : ''}">${fav[i]}<span class="lbl text-start text-nowrap">${t}</span><span class="fx-x">x</span></button>`));
$('tabs').insertAdjacentHTML('beforeend', '<button class="fx-plus" aria-label="New tab">+</button>');
['Everyday','School','Caitlyn','NU','Potential Employers','Food','Recreation','Wooddale','Most Visited','Computer','Getting Started','US Bank','Anniv','Target','SFL']
  .forEach(t => $('marks').insertAdjacentHTML('beforeend', `<a href="#">${t == 'Most Visited' ? '<svg width="15" height="16"><path d="M1 1h11v14H1z" fill="#7db5dd" stroke="#4a86b5"/><circle cx="7" cy="6" r="3" fill="none" stroke="#174a78"/><path d="M5 8l-2 4" stroke="#174a78"/></svg>' : use(t == 'Getting Started' ? 'dash' : 'folder',15,16)}${t}</a>`));

/* column edges in pixels from the left of the row headers, then equal columns */
const names = [], edge = [28,42,63,84,105,147,168,189,210,240,261,282,303,334,355,377,405,435,464,479,507,537,566,586,614,644,672,692,720,762,791,808,836,880,908,929,957,978];
while (edge.length < 68) edge.push(edge.at(-1) + 21);
edge.push(1618, 1629, 1650, 1671);
for (let i = 0; i < 71; i++) names.push((i > 25 ? String.fromCharCode(64 + Math.floor(i / 26)) : '') + String.fromCharCode(65 + i % 26));
names.forEach((n, i) => { const w = edge[i+1] - edge[i]; $('heads').insertAdjacentHTML('beforeend', `<div class="${n == 'BD' ? 'sel' : ''}" style="width:${w}px">${w < 13 ? n[0] : n}</div>`); });
const rowNo = [...Array(16).keys()].map(i => i + 1).concat([...Array(16).keys()].map(i => i + 23));
rowNo.forEach(r => $('rows').insertAdjacentHTML('beforeend', `<div class="${r == 33 ? 'sel' : ''}">${r}</div>`));
const X = c => edge[names.indexOf(c)] - 28, Y = r => rowNo.indexOf(r) * 25;

/* [column, row, id, es, ef, slack, description, ls, duration, lf, free slack] */
const acts = [
  ['B',2,'A',0,5,5,'Est. RFV',5,5,10,5],['B',6,'B',0,5,5,'Est.<br>LifeSta',5,5,10,5],['B',10,'C',0,10,0,'Est.<br>T/S',0,10,10,0],['B',14,'D',0,10,0,'Define Tim',0,10,10,0],
  ['F',8,'E',10,20,0,'Record<br>Info',10,10,20,0],['J',5,'F',20,24,2,'Design<br>MicroStr',22,4,26,2],['J',11,'',20,26,0,'Design<br>Tableau',20,6,26,0],
  ['N',8,'H',26,34,0,'Record<br>Best Code',26,8,34,0],['R',5,'I',34,42,0,'Est<br>ADW',34,8,42,0],['R',11,'J',34,42,0,'Est<br>EDW',34,8,42,'<b>0</b>'],
  ['V',8,'K',42,48,0,'Record<br>Path Code',42,6,48,''],['Z',4,'L',48,52,4,'Write SAS',52,4,56,4],['Z',8,'M',48,54,2,'Write<br>Teradata',50,6,56,2],['Z',12,'N',48,56,0,'Write<br>Hadoop',48,8,56,0],
  ['AD',8,'O',56,62,0,'Backwrite<br>Code',56,6,62,0],['AH',8,'P',62,70,0,'Present<br>Progress',62,8,70,0],
  ['B',28,'Q',70,78,0,'Pilot<br>Report',70,8,78,0],['F',28,'R',78,84,0,'Iterate<br>Feedback',78,6,84,0],['J',24,'S',84,96,0,'Update<br>SQL',84,12,96,0],['J',32,'T',84,96,0,'Update<br>IR',84,12,96,0],
  ['N',28,'U',96,106,0,'Update<br>Members',96,10,106,0],['R',28,'V',106,110,0,'Create<br>Deck',106,4,110,0],['V',28,'W',110,118,0,'Create<br>Demo',110,8,118,0],['Z',28,'X',118,122,0,'Present<br>Report',118,4,122,0],
  ['AD',28,'Y',122,124,0,'Collect<br>Feedback',122,2,124,0],['AH',28,'Z',124,128,0,'Final<br>Document',124,4,128,0],
  ['AH',3,'ID','ES','EF','SL','Description','LS','DUR','LF',null]];
acts.forEach(([c, r, id, es, ef, sl, ds, ls, du, lf, fs]) => {
  const i = names.indexOf(c), w = [0,1,2].map(k => edge[i+k+1] - edge[i+k]);
  const cols = `grid-template-columns:${w[0]}px ${w[1]}px ${w[2]-2}px`;
  const key = fs === null, mid = key || ['A','B','C'].includes(id);
  $('sheet').insertAdjacentHTML('beforeend', `<div class="act" style="left:${X(c) - 2}px;top:${Y(r) - 2}px">
    <div class="box${key ? ' key' : ''}" style="${cols}"><div>${es}</div><div>${id}</div><div class="e">${ef}</div><div>${sl}</div><div class="dsc${mid ? ' mid' : ''}"><span>${ds}</span></div><div class="b">${ls}</div><div class="b${key ? ' dur' : ''}">${du}</div><div class="b e">${lf}</div></div>
    ${key ? '' : `<div class="slack" style="${cols} 20px"><span>TS=</span><span class="v">${sl}</span><span>FS</span><span class="v">&nbsp;${fs}</span></div>`}</div>`);
});

/* connectors: [dashed, x1, y1, x2, y2, ...] */
const arrows = [
  [0,105,283,142,347],[0,105,343,142,384],[1,105,445,142,409],[1,106,544,145,435],[0,210,393,237,320],[1,210,409,233,467],[0,304,317,331,391],[1,303,469,329,409],
  [1,406,390,430,321],[1,404,399,430,469],[1,506,317,533,387],[1,507,468,534,397],[0,615,391,641,298],[0,614,399,643,398],[1,615,419,638,492],[0,722,293,757,387],
  [0,721,392,756,394],[1,721,494,758,409],[1,837,393,872,394],[1,908,433,911,602,72,602,72,708],[1,105,742,142,742],[1,210,735,236,646],[1,210,746,236,845],[1,303,644,331,741],
  [1,304,844,330,759],[1,405,744,435,744],[1,506,744,537,744],[1,614,743,644,743],[1,720,743,750,743],[1,836,743,866,743],[1,396,242,571,242]];
$('sheet').insertAdjacentHTML('afterbegin', '<div class="note">Prusinski MetaGuest AON<br>Critical Path</div><div class="stray"></div>');
$('sheet').insertAdjacentHTML('beforeend', `<svg width="100%" height="100%"><defs><marker id="hd" viewBox="-11 -6 12 12" refX="0" markerWidth="12" markerHeight="12" refY="0" markerUnits="userSpaceOnUse" orient="auto"><path d="M-10-5L0 0L-10 5" fill="none" stroke="#4a7ebb"/></marker></defs>
  <path d="M949.500 0V800M0 749.500H1700" stroke="#000" stroke-dasharray="4 2"/>
  <g transform="translate(-28 -184)" fill="none" stroke="#4a7ebb">${arrows.map(([d, ...p]) => `<polyline points="${p.map(v => v + .5)}" marker-end="url(#hd)"${d ? ' stroke-dasharray="3 1"' : ''}/>`).join('')}<path d="M528 508l-8 24"/></g></svg>
  <div class="cursor"></div><div class="act" style="left:${X('AH')}px;top:${Y(2)}px;width:77px;text-align:center">Legend</div>`);

/* taskbar groups */
const ic = {
  d: '<svg width="30" height="32"><path d="M2 3l12-2v28l-4 2-8-3z" fill="#f6df86" stroke="#c9a940"/><path d="M12 4l9-2v24l-9 4z" fill="#fbeeb0" stroke="#c9a940"/></svg>',
  w: use('word',30,30), f: use('ff',30,30), x: use('xls',30,30),
  p: '<svg width="32" height="32"><path d="M10 3h15l6 6v22H10z" fill="#fff"/><path d="M15 27c4-6 6-13 5-16s-3 2 0 7 6 6 9 4-6-3-14 5z" fill="none" stroke="#c4161c" stroke-width="2"/><path d="M1 2h20v10H1z" fill="#c4161c"/><path d="M4 10V4h3v3H4M10 4v6h3V4zM16 10V4h3M16 7h2" fill="none" stroke="#fff"/></svg>',
  m: '<svg width="32" height="32"><path d="M1 8l6-3v20l-6-2z" fill="#ccc"/><path d="M8 3l22 2-2 20L7 23z" fill="#ddd" stroke="#999"/><path d="M10 5l18 2-2 16-17-2z" fill="#123"/><path d="M10 17l3-5 2 6 3-9 2 10 3-7 3 4" fill="none" stroke="#2ecc40" stroke-width="1.500"/><ellipse cx="18" cy="28" rx="8" ry="3" fill="#ddd"/></svg>'};
[[['d','Session 3']],[['w','475 Project ...'],['w','475 Project ...'],['w','MetaGuest ...'],['w','MetaGuest ...'],['w','Prusinski A3 ...']],[['f','How To Ma...'],['f','Library']],[['x','Microsoft Ex...']],[['p','Deliberate Ig...']],[['m','Windows Ta...']]]
  .forEach(g => $('tasks').insertAdjacentHTML('beforeend', `<div class="d-flex">${g.map(([k, t]) => `<button class="tk${k == 'x' ? ' cur' : ''}">${ic[k]}<span>${t}</span></button>`).join('')}</div>`));
</script>
</body>
</html>
